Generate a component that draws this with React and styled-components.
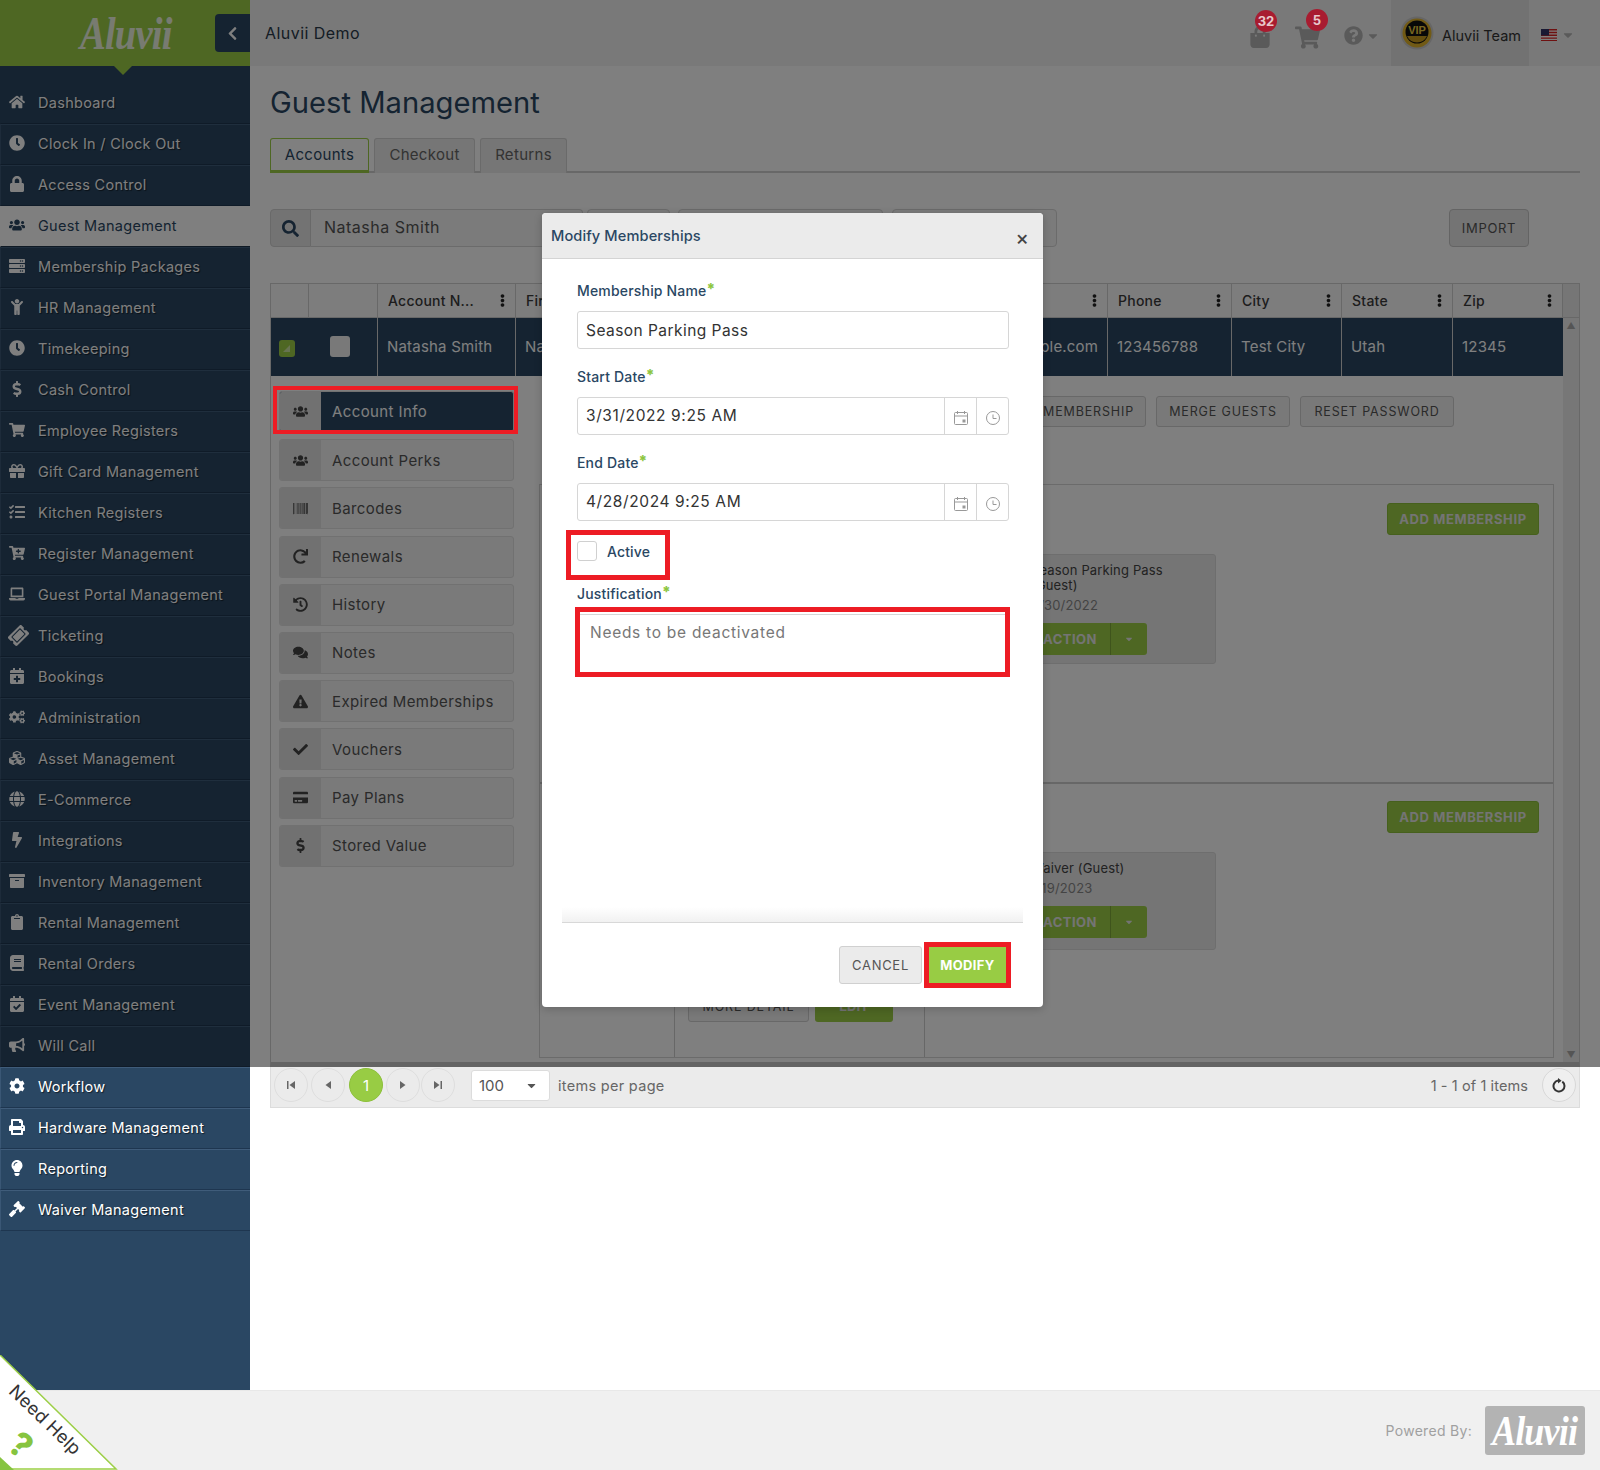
import React from "react";
import styled, { createGlobalStyle } from "styled-components";
import {
  FaHome, FaClock, FaLock, FaUsers, FaServer, FaChild, FaDollarSign, FaShoppingCart, FaGift,
  FaTasks, FaLaptop, FaTicketAlt, FaCalendarPlus, FaCogs, FaCubes, FaGlobe, FaBolt, FaArchive,
  FaClipboard, FaBook, FaCalendarCheck, FaBullhorn, FaCog, FaPrint, FaLightbulb, FaGavel,
  FaSearch, FaBarcode, FaRedo, FaHistory, FaComments, FaExclamationTriangle, FaCheck, FaCreditCard,
  FaChevronLeft, FaShoppingBag, FaQuestionCircle, FaEllipsisV, FaCaretDown, FaCartPlus,
} from "react-icons/fa";

const FONT = `Inter, "Noto Sans", "Liberation Sans", sans-serif`;

const Global = createGlobalStyle`
  html, body { margin: 0; padding: 0; background: #fff; }
  body { font-family: ${FONT}; color: #333; }
  * { box-sizing: border-box; }
`;

const Root = styled.div`
  position: relative;
  width: 1600px;
  height: 1470px;
  overflow: hidden;
  display: grid;
  grid-template-columns: 250px 1350px;
  grid-template-rows: 1390px 80px;
`;

/* ---------- sidebar ---------- */
const Sidebar = styled.aside`
  background: #2a4763;
  display: flex;
  flex-direction: column;
`;
const Brand = styled.div`
  position: relative;
  height: 66px;
  background: #9ccf46;
  flex: none;
  &::after {
    content: "";
    position: absolute;
    left: 114px;
    top: 66px;
    border: 9px solid transparent;
    border-top-color: #9ccf46;
    border-bottom: 0;
  }
`;
const BrandMark = styled.span`
  position: absolute;
  left: 80px;
  top: 6px;
  font-family: "Liberation Serif", serif;
  font-style: italic;
  font-weight: 700;
  font-size: 46px;
  line-height: 56px;
  color: #fff;
  opacity: 0.85;
  letter-spacing: -1px;
  transform-origin: left center;
  transform: scaleX(0.84);
`;
const Toggle = styled.button`
  position: absolute;
  left: 215px;
  top: 14px;
  width: 35px;
  height: 38px;
  border: 0;
  border-radius: 4px 0 0 4px;
  background: #2a4763;
  color: #fff;
  display: flex;
  align-items: center;
  justify-content: center;
  font-size: 15px;
  padding: 0;
`;
const Nav = styled.nav`
  margin-top: 17px;
  display: flex;
  flex-direction: column;
`;
const NavRow = styled.div`
  height: 41px;
  display: flex;
  align-items: center;
  padding: 0 0 3px 8px;
  font-size: 14.5px;
  letter-spacing: 0.3px;
  border-bottom: 1px solid ${(p) => (p.$active ? "#1d3249" : "#1e3650")};
  border-top: 1px solid ${(p) => (p.$active ? "#fff" : "#3f5c7a")};
  border-left: 1px solid ${(p) => (p.$active ? "transparent" : "#3a5775")};
  background: ${(p) => (p.$active ? "#fff" : "#2a4763")};
  color: ${(p) => (p.$active ? "#2a4763" : "#fff")};
  text-shadow: ${(p) => (p.$active ? "none" : "1px 1px 1px rgba(0,0,0,.55)")};
  &:first-child { border-left-color: transparent; border-top-color: transparent; }
`;
const NavIcon = styled.span`
  width: 29px;
  flex: none;
  display: flex;
  align-items: center;
  font-size: 16px;
  color: ${(p) => (p.$active ? "#2a4763" : "#fff")};
`;
const TiltedTicket = styled(FaTicketAlt)`
  transform: rotate(-45deg);
  font-size: 19px;
`;

/* ---------- main ---------- */
const Main = styled.main`
  display: flex;
  flex-direction: column;
  min-width: 0;
  background: #fff;
`;
const TopBar = styled.header`
  height: 66px;
  flex: none;
  background: #f2f2f2;
  display: flex;
  align-items: center;
  padding-left: 15px;
`;
const Company = styled.div`
  font-size: 16px;
  letter-spacing: 0.45px;
  color: #2a3a4a;
  flex: 1;
  margin-top: -1px;
`;
const TopIcon = styled.div`
  position: relative;
  display: flex;
  align-items: center;
  gap: ${(p) => p.$gap || 0}px;
  padding-left: ${(p) => p.$pl || 0}px;
  color: #b4b4b4;
  margin-top: ${(p) => p.$mt ?? 8}px;
  width: ${(p) => p.$w}px;
`;
const Badge = styled.span`
  position: absolute;
  z-index: 6;
  top: -16px;
  left: ${(p) => p.$left}px;
  width: 22px;
  height: 22px;
  border-radius: 50%;
  background: #a81c30;
  color: #e8c9cc;
  font-size: 13px;
  font-weight: 700;
  display: flex;
  align-items: center;
  justify-content: center;
`;
const UserBox = styled.div`
  width: 138px;
  height: 66px;
  background: #e4e4e4;
  display: flex;
  align-items: center;
  padding-left: 9px;
  gap: 8px;
  font-size: 14.5px;
  color: #333;
`;
const UserName = styled.span`
  margin-top: 4px;
`;
const LangBox = styled.div`
  width: 71px;
  display: flex;
  align-items: center;
  gap: 4px;
  padding-left: 12px;
  color: #b4b4b4;
  margin-top: 3px;
`;
const Page = styled.div`
  display: flex;
  flex-direction: column;
  padding: 0 20px;
`;
const Title = styled.h1`
  margin: 19px 0 17px;
  height: 36px;
  font-size: 29.2px;
  line-height: 36px;
  font-weight: 400;
  letter-spacing: 0;
  color: #2a4763;
`;
const Tabs = styled.div`
  height: 35px;
  display: flex;
  gap: 5px;
  border-bottom: 2px solid #d0d0d0;
`;
const Tab = styled.div`
  height: 35px;
  width: ${(p) => p.$w}px;
  display: flex;
  align-items: center;
  justify-content: center;
  padding-bottom: ${(p) => (p.$active ? 0 : 3)}px;
  font-size: 15px;
  letter-spacing: 0.3px;
  border: 1px solid ${(p) => (p.$active ? "#9ccf46" : "#d4d4d4")};
  border-bottom: ${(p) => (p.$active ? "3px solid #9ccf46" : "0")};
  border-radius: 3px 3px 0 0;
  background: ${(p) => (p.$active ? "#fff" : "#ececec")};
  color: ${(p) => (p.$active ? "#2a4763" : "#666")};
`;
const SearchRow = styled.div`
  margin-top: 36px;
  height: 38px;
  display: flex;
`;
const SearchAddon = styled.div`
  width: 41px;
  flex: none;
  border: 1px solid #d2d2d2;
  border-radius: 4px 0 0 4px;
  background: #e6e6e6;
  color: #2a4763;
  display: flex;
  align-items: center;
  justify-content: center;
  font-size: 17px;
`;
const SearchInput = styled.div`
  width: ${(p) => p.$w}px;
  flex: none;
  margin-left: ${(p) => p.$ml || 0}px;
  border: 1px solid #d6d6d6;
  border-left-width: ${(p) => (p.$join ? 0 : 1)}px;
  border-radius: ${(p) => (p.$join ? "0 4px 4px 0" : "4px")};
  background: #f6f6f6;
  padding: 0 0 2px 13px;
  font-size: 16px;
  letter-spacing: 0.5px;
  color: #555;
  display: flex;
  align-items: center;
`;
const ImportButton = styled.div`
  margin-left: auto;
  margin-right: 51px;
  width: 80px;
  border: 1px solid #c8c8c8;
  border-radius: 4px;
  background: #e8e8e8;
  color: #555;
  font-size: 13px;
  letter-spacing: 0.7px;
  display: flex;
  align-items: center;
  justify-content: center;
`;

/* ---------- grid ---------- */
const COLS = "38px 69px 138px 125px 160px 307px 124px 110px 111px 110px";
const Grid = styled.section`
  margin-top: 36px;
  height: 784px;
  border: 1px solid #d0d0d0;
  border-bottom-width: 5px;
  border-bottom-color: #c8c8c8;
  display: flex;
  flex-direction: column;
  overflow: hidden;
`;
const HeadRow = styled.div`
  height: 34px;
  flex: none;
  display: grid;
  grid-template-columns: ${COLS} 16px;
  background: #fafafa;
`;
const HeadCell = styled.div`
  border-right: 1px solid #d0d0d0;
  border-bottom: 1px solid #d0d0d0;
  display: flex;
  align-items: center;
  justify-content: space-between;
  padding: 0 6px 0 10px;
  font-size: 14px;
  letter-spacing: 0.25px;
  font-weight: 500;
  color: #3a3a3a;
  white-space: nowrap;
  &:last-child { border-right: 0; background: #ededed; }
`;
const GridBody = styled.div`
  flex: 1;
  display: flex;
  min-height: 0;
`;
const GridScroll = styled.div`
  width: 1292px;
  flex: none;
  display: flex;
  flex-direction: column;
`;
const ScrollBar = styled.div`
  width: 16px;
  flex: none;
  background: #efefef;
  display: flex;
  flex-direction: column;
  justify-content: space-between;
  align-items: center;
  padding: 3px 0;
  color: #aaa;
  font-size: 9px;
  line-height: 9px;
`;
const DataRow = styled.div`
  height: 58px;
  flex: none;
  display: grid;
  grid-template-columns: ${COLS};
  background: #2a4763;
  color: #fff;
`;
const DataCell = styled.div`
  border-right: ${(p) => (p.$plain ? "0" : "1px solid #d0d0d0")};
  display: flex;
  align-items: center;
  justify-content: ${(p) => p.$align || "flex-start"};
  padding-left: ${(p) => (p.$align ? 0 : 9)}px;
  padding-bottom: 1px;
  font-size: 15px;
  letter-spacing: 0.2px;
  white-space: nowrap;
  overflow: hidden;
`;
const RowSelect = styled.span`
  width: 16px;
  height: 17px;
  margin-top: 4px;
  margin-left: -6px;
  border-radius: 3px;
  background: #9ccf46;
  position: relative;
  &::after {
    content: "";
    position: absolute;
    left: 4px;
    top: 5px;
    border-style: solid;
    border-width: 0 0 7px 7px;
    border-color: transparent transparent #cfe6a2 transparent;
  }
`;
const RowCheck = styled.span`
  width: 20px;
  height: 21px;
  margin-left: -6px;
  border-radius: 3px;
  background: #f2f2f2;
`;
const Detail = styled.div`
  flex: 1;
  display: flex;
`;
const SideTabs = styled.div`
  width: 268px;
  flex: none;
  padding: 15px 0 0 8px;
`;
const SideTab = styled.div`
  width: 235px;
  height: ${(p) => (p.$active ? 41 : 42)}px;
  margin-bottom: ${(p) => (p.$active ? 7.2 : 6.2)}px;
  display: flex;
  border: 1px solid #e2e2e2;
  border-radius: 3px;
  overflow: hidden;
  background: ${(p) => (p.$active ? "#2a4763" : "#f4f4f4")};
  color: ${(p) => (p.$active ? "#fff" : "#555")};
  font-size: 15px;
  letter-spacing: 0.4px;
`;
const SideTabIcon = styled.span`
  width: 41px;
  flex: none;
  background: #e2e2e2;
  color: #444;
  display: flex;
  align-items: center;
  justify-content: center;
  font-size: 15px;
`;
const SideTabLabel = styled.span`
  padding-left: 11px;
  display: flex;
  align-items: center;
`;
const DetailMain = styled.div`
  flex: 1;
  display: flex;
  flex-direction: column;
  padding-top: 20px;
`;
const Actions = styled.div`
  display: flex;
  justify-content: flex-end;
  padding-right: 109px;
  height: 31px;
`;
const GhostButton = styled.div`
  width: ${(p) => p.$w}px;
  height: ${(p) => p.$h || 31}px;
  margin-left: ${(p) => p.$ml || 0}px;
  padding-right: ${(p) => p.$pr || 0}px;
  border: 1px solid #d0d0d0;
  border-radius: 3px;
  background: #f3f3f3;
  color: #555;
  font-size: 12.5px;
  letter-spacing: 0.85px;
  display: flex;
  align-items: center;
  justify-content: ${(p) => (p.$pr ? "flex-end" : "center")};
  white-space: nowrap;
`;
const Panel = styled.div`
  margin-top: 57px;
  width: 1015px;
  height: 574px;
  border: 1px solid #d6d6d6;
  display: flex;
  flex-direction: column;
`;
const PanelSection = styled.div`
  height: ${(p) => p.$h}px;
  display: grid;
  grid-template-columns: 135px 250px 1fr;
  border-bottom: ${(p) => (p.$line ? "2px solid #cfcfcf" : "0")};
`;
const PanelCol = styled.div`
  border-right: 1px solid #cfcfcf;
  padding: ${(p) => p.$pad || "0"};
  display: flex;
  gap: 6px;
  align-items: flex-start;
`;
const PanelRight = styled.div`
  display: flex;
  flex-direction: column;
  padding: ${(p) => p.$top}px 14px 0 91px;
`;
const AddButton = styled.div`
  align-self: flex-end;
  width: 152px;
  height: 32px;
  background: #9ccf46;
  border: 1px solid #8cc03a;
  border-radius: 3px;
  color: #e8e8e8;
  font-size: 13px;
  font-weight: 700;
  letter-spacing: 0.6px;
  display: flex;
  align-items: center;
  justify-content: center;
`;
const MemberCard = styled.div`
  margin-top: 19px;
  width: 200px;
  height: ${(p) => p.$h}px;
  background: #ebebeb;
  border: 1px solid #dcdcdc;
  border-radius: 3px;
  padding: 8px 12px 0 14px;
  font-size: 13px;
  line-height: 15px;
  letter-spacing: 0.15px;
  color: #444;
`;
const MemberDate = styled.div`
  margin-top: 2px;
  color: #888;
  line-height: 20px;
`;
const SplitButton = styled.div`
  margin-top: 8px;
  width: 116px;
  height: 32px;
  display: flex;
  background: #9ccf46;
  border-radius: 3px;
  color: #e8e8e8;
  font-size: 13px;
  font-weight: 700;
  letter-spacing: 0.5px;
`;
const SplitLabel = styled.span`
  flex: 1;
  display: flex;
  align-items: center;
  justify-content: flex-end;
  padding-right: 13px;
  border-right: 1px solid #7fa838;
`;
const SplitCaret = styled.span`
  width: 36px;
  display: flex;
  align-items: center;
  justify-content: center;
  font-size: 10px;
`;
const EditButton = styled.div`
  width: 78px;
  height: 32px;
  background: #9ccf46;
  border-radius: 3px;
  color: #e8e8e8;
  font-weight: 700;
  font-size: 13px;
  display: flex;
  align-items: center;
  justify-content: center;
`;

/* ---------- pager ---------- */
const Pager = styled.div`
  height: 41px;
  flex: none;
  background: #ebebeb;
  border-bottom: 1px solid #dcdcdc;
  border-left: 1px solid #dcdcdc;
  border-right: 1px solid #dcdcdc;
  display: flex;
  align-items: center;
  padding: 0 3px 4px 3px;
`;
const PageDot = styled.div`
  width: 34px;
  height: 34px;
  margin-right: ${(p) => p.$mr ?? 3}px;
  border-radius: 50%;
  border: 1px solid ${(p) => (p.$on ? "#8cc03a" : "#dedede")};
  background: ${(p) => (p.$on ? "#98cc44" : "#ebebeb")};
  color: ${(p) => (p.$on ? "#fff" : "#666")};
  display: flex;
  align-items: center;
  justify-content: center;
  font-size: 15px;
`;
const PageSize = styled.div`
  width: 79px;
  height: 31px;
  margin-left: 13px;
  background: #fff;
  border: 1px solid #dcdcdc;
  border-radius: 3px;
  display: flex;
  align-items: center;
  justify-content: space-between;
  padding: 0 11px 0 7px;
  font-size: 15px;
  color: #555;
`;
const PagerText = styled.span`
  font-size: 14.5px;
  letter-spacing: ${(p) => p.$ls ?? 0.3}px;
  color: #666;
  margin-left: ${(p) => p.$ml || 0}px;
`;
const Spacer = styled.div`
  flex: 1;
`;
const Refresh = styled.div`
  width: 34px;
  height: 34px;
  margin-left: 14px;
  border-radius: 50%;
  border: 1px solid #d8d8d8;
  background: #efefef;
  display: flex;
  align-items: center;
  justify-content: center;
  color: #333;
`;

/* ---------- footer ---------- */
const Footer = styled.footer`
  grid-column: 1 / -1;
  background: #f0f0f0;
  border-top: 1px solid #e8e8e8;
  display: flex;
  align-items: center;
  justify-content: flex-end;
  padding-right: 15px;
  gap: 13px;
`;
const Powered = styled.span`
  font-size: 14px;
  letter-spacing: 0.3px;
  color: #a0a0a0;
`;
const FooterLogo = styled.div`
  width: 100px;
  height: 49px;
  background: #b3b3b3;
  border-radius: 3px;
  color: #fff;
  font-family: "Liberation Serif", serif;
  font-style: italic;
  font-weight: 700;
  font-size: 42px;
  letter-spacing: -1px;
  display: flex;
  align-items: center;
  justify-content: center;
  overflow: hidden;
`;
const FooterLogoText = styled.span`
  display: block;
  transform: scaleX(0.86);
`;

/* ---------- overlay + modal ---------- */
const Scrim = styled.div`
  position: absolute;
  left: 0;
  top: 0;
  width: 1600px;
  height: 1067px;
  background: rgba(0, 0, 0, 0.5);
  z-index: 3;
`;
const Modal = styled.div`
  position: absolute;
  z-index: 4;
  left: 542px;
  top: 213px;
  width: 501px;
  height: 794px;
  background: #fff;
  border-radius: 4px;
  box-shadow: 0 2px 8px rgba(0, 0, 0, 0.2);
  display: flex;
  flex-direction: column;
  overflow: hidden;
`;
const ModalHead = styled.div`
  height: 46px;
  flex: none;
  background: #ebebeb;
  border-bottom: 1px solid #d4d4d4;
  display: flex;
  align-items: center;
  justify-content: space-between;
  padding: 0 14px 0 9px;
  font-size: 14.6px;
  font-weight: 500;
  letter-spacing: 0.1px;
  color: #2a4763;
`;
const CloseX = styled.span`
  font-size: 20px;
  color: #444;
  margin-top: 5px;
  line-height: 20px;
`;
const ModalBody = styled.div`
  flex: 1;
  display: flex;
  flex-direction: column;
  padding: 22px 34px 0 35px;
`;
const FieldLabel = styled.label`
  height: 20px;
  margin-top: ${(p) => p.$mt || 0}px;
  margin-bottom: 10px;
  padding-bottom: 2px;
  display: flex;
  align-items: center;
  font-size: 14px;
  font-weight: 500;
  letter-spacing: 0.18px;
  color: #2a4763;
`;
const Required = styled.span`
  color: #8dc63f;
  font-size: 15px;
  font-weight: 800;
  line-height: 14px;
  align-self: flex-start;
  margin-top: 1px;
`;
const TextField = styled.div`
  height: 38px;
  flex: none;
  border: 1px solid #d6d6d6;
  border-radius: 3px;
  display: flex;
  align-items: center;
  padding-left: 8px;
  font-size: 15.5px;
  letter-spacing: 0.45px;
  color: #333;
`;
const DateField = styled(TextField)`
  padding-left: 0;
`;
const DateValue = styled.span`
  flex: 1;
  padding: 0 0 2px 8px;
  letter-spacing: 0.6px;
`;
const DateAddon = styled.span`
  width: 32px;
  height: 100%;
  border-left: 1px solid #d6d6d6;
  display: flex;
  align-items: center;
  justify-content: center;
  padding-top: 3px;
  color: #999;
`;
const CheckRow = styled.div`
  margin-top: 20px;
  height: 20px;
  flex: none;
  display: flex;
  align-items: center;
  gap: 10px;
  font-size: 14px;
  font-weight: 500;
  letter-spacing: 0.15px;
  color: #2a4763;
`;
const CheckBox = styled.span`
  width: 20px;
  height: 20px;
  border: 1px solid #d0d0d0;
  border-radius: 3px;
  background: #fff;
`;
const TextArea = styled.div`
  height: 61px;
  flex: none;
  border-top: 1px solid #d6d6d6;
  padding: 7px 0 0 13px;
  font-size: 15.5px;
  letter-spacing: 0.72px;
  line-height: 22px;
  color: #777;
`;
const ModalFoot = styled.div`
  margin: auto -14px 0 -15px;
  flex: none;
`;
const FootRule = styled.div`
  height: 16px;
  background: linear-gradient(#fff, #f1f1f1);
  border-bottom: 1px solid #d8d8d8;
`;
const FootButtons = styled.div`
  display: flex;
  justify-content: flex-end;
  gap: 7px;
  padding: 23px 17px 23px 0;
`;
const CancelButton = styled.div`
  width: 83px;
  height: 38px;
  background: #ebebeb;
  border: 1px solid #d0d0d0;
  border-radius: 3px;
  color: #555;
  font-size: 13px;
  letter-spacing: 0.7px;
  display: flex;
  align-items: center;
  justify-content: center;
`;
const ModifyButton = styled.div`
  width: 77px;
  height: 38px;
  background: #98cc44;
  color: #fff;
  font-size: 13px;
  font-weight: 700;
  letter-spacing: 0.35px;
  display: flex;
  align-items: center;
  justify-content: center;
`;

/* ---------- annotation boxes that lie over the picture ---------- */
const RedBox = styled.div`
  position: absolute;
  z-index: 5;
  left: ${(p) => p.$x}px;
  top: ${(p) => p.$y}px;
  width: ${(p) => p.$w}px;
  height: ${(p) => p.$h}px;
  border: ${(p) => p.$t}px solid #ed1c24;
`;

/* ---------- need help ribbon ---------- */
const HelpCorner = styled.div`
  position: absolute;
  z-index: 7;
  left: 0;
  top: 1355px;
  width: 118px;
  height: 115px;
`;
const HelpText = styled.span`
  position: absolute;
  left: -5px;
  top: 54px;
  width: 100px;
  text-align: center;
  transform: rotate(44deg);
  font-size: 18px;
  line-height: 22px;
  color: #333;
  white-space: nowrap;
  letter-spacing: 0.2px;
`;
const HelpMark = styled.span`
  position: absolute;
  left: 11px;
  top: 72px;
  transform: rotate(38deg);
  font-size: 34px;
  line-height: 36px;
  font-weight: 800;
  color: #86c440;
`;

const menu = [
  ["Dashboard", FaHome], ["Clock In / Clock Out", FaClock], ["Access Control", FaLock],
  ["Guest Management", FaUsers, true], ["Membership Packages", FaServer], ["HR Management", FaChild],
  ["Timekeeping", FaClock], ["Cash Control", FaDollarSign], ["Employee Registers", FaShoppingCart],
  ["Gift Card Management", FaGift], ["Kitchen Registers", FaTasks], ["Register Management", FaCartPlus],
  ["Guest Portal Management", FaLaptop], ["Ticketing", TiltedTicket], ["Bookings", FaCalendarPlus],
  ["Administration", FaCogs], ["Asset Management", FaCubes], ["E-Commerce", FaGlobe],
  ["Integrations", FaBolt], ["Inventory Management", FaArchive], ["Rental Management", FaClipboard],
  ["Rental Orders", FaBook], ["Event Management", FaCalendarCheck], ["Will Call", FaBullhorn],
  ["Workflow", FaCog], ["Hardware Management", FaPrint], ["Reporting", FaLightbulb], ["Waiver Management", FaGavel],
];
const sideTabs = [
  ["Account Info", FaUsers, true], ["Account Perks", FaUsers], ["Barcodes", FaBarcode], ["Renewals", FaRedo],
  ["History", FaHistory], ["Notes", FaComments], ["Expired Memberships", FaExclamationTriangle],
  ["Vouchers", FaCheck], ["Pay Plans", FaCreditCard], ["Stored Value", FaDollarSign],
];

const Dots = () => <FaEllipsisV size={13} color="#222" />;

const CalIcon = () => (
  <svg width="16" height="16" viewBox="0 0 16 16" fill="none" stroke="currentColor">
    <rect x="1.5" y="2.5" width="13" height="12" rx="1" />
    <path d="M1.5 6h13M4.5 1v3M11.5 1v3" />
    <rect x="9.5" y="9.5" width="3" height="3" fill="currentColor" stroke="none" />
  </svg>
);
const ClockIcon = () => (
  <svg width="16" height="16" viewBox="0 0 16 16" fill="none" stroke="currentColor">
    <circle cx="8" cy="8" r="6.5" />
    <path d="M8 4.5V8.5H11.5" />
  </svg>
);
const PageGlyph = ({ d }) => (
  <svg width="10" height="10" viewBox="0 0 10 10" fill="#666">
    <path d={d} />
  </svg>
);
const ReloadIcon = () => (
  <svg width="16" height="16" viewBox="0 0 16 16" fill="none">
    <path d="M11.3 4.6A5.5 5.5 0 1 1 7 3.6" stroke="currentColor" strokeWidth="2" />
    <path d="M7 1v5.4l3.6-2.7z" fill="currentColor" />
  </svg>
);
const Avatar = () => (
  <svg width="34" height="34" viewBox="0 0 34 34">
    <circle cx="17" cy="17" r="16.5" fill="#ccc" />
    <circle cx="17" cy="17" r="14.5" fill="#e2b42a" />
    <circle cx="17" cy="16" r="11.5" fill="#111" />
    <path d="M7 20h20a11 11 0 0 1-20 0z" fill="#c99a1c" />
    <text x="17" y="18" textAnchor="middle" fontSize="11" fontWeight="700" fill="#f0cf40" fontFamily="Liberation Sans, sans-serif">VIP</text>
  </svg>
);
const Flag = () => (
  <svg width="16" height="12" viewBox="0 0 16 12">
    <rect width="16" height="12" fill="#fff" />
    <path d="M0 0h16v1.4H0zM0 2.8h16v1.4H0zM0 5.6h16V7H0zM0 8.4h16v1.4H0zM0 11h16v1H0z" fill="#d22" />
    <rect width="8" height="6.5" fill="#336" />
  </svg>
);

export default function App() {
  return (
    <>
      <Global />
      <Root>
        <Sidebar>
          <Brand>
            <BrandMark>Aluvii</BrandMark>
            <Toggle><FaChevronLeft /></Toggle>
          </Brand>
          <Nav>
            {menu.map(([label, Icon, active]) => (
              <NavRow key={label} $active={active}>
                <NavIcon $active={active}><Icon /></NavIcon>
                {label}
              </NavRow>
            ))}
          </Nav>
        </Sidebar>

        <Main>
          <TopBar>
            <Company>Aluvii Demo</Company>
            <TopIcon $w={48} $pl={2}>
              <FaShoppingBag size={22} />
              <Badge $left={8}>32</Badge>
            </TopIcon>
            <TopIcon $w={46}>
              <FaShoppingCart size={25} />
              <Badge $left={11}>5</Badge>
            </TopIcon>
            <TopIcon $w={50} $pl={3} $gap={3} $mt={5}>
              <FaQuestionCircle size={19} />
              <FaCaretDown size={14} />
            </TopIcon>
            <UserBox><Avatar /><UserName>Aluvii Team</UserName></UserBox>
            <LangBox><Flag /><FaCaretDown size={14} /></LangBox>
          </TopBar>

          <Page>
            <Title>Guest Management</Title>
            <Tabs>
              <Tab $active $w={99}>Accounts</Tab>
              <Tab $w={101}>Checkout</Tab>
              <Tab $w={87}>Returns</Tab>
            </Tabs>
            <SearchRow>
              <SearchAddon><FaSearch /></SearchAddon>
              <SearchInput $join $w={272}>Natasha Smith</SearchInput>
              <SearchInput $ml={4} $w={83} />
              <SearchInput $ml={8} $w={205} />
              <SearchInput $ml={9} $w={165} />
              <ImportButton>IMPORT</ImportButton>
            </SearchRow>

            <Grid>
              <HeadRow>
                <HeadCell />
                <HeadCell />
                <HeadCell>Account N...<Dots /></HeadCell>
                <HeadCell>First</HeadCell>
                <HeadCell />
                <HeadCell>Email<Dots /></HeadCell>
                <HeadCell>Phone<Dots /></HeadCell>
                <HeadCell>City<Dots /></HeadCell>
                <HeadCell>State<Dots /></HeadCell>
                <HeadCell>Zip<Dots /></HeadCell>
                <HeadCell />
              </HeadRow>
              <GridBody>
                <GridScroll>
                  <DataRow>
                    <DataCell $plain $align="center"><RowSelect /></DataCell>
                    <DataCell $align="center"><RowCheck /></DataCell>
                    <DataCell>Natasha Smith</DataCell>
                    <DataCell>Natasha</DataCell>
                    <DataCell>Smith</DataCell>
                    <DataCell $align="flex-end">natasha@example.com&nbsp;&nbsp;</DataCell>
                    <DataCell>123456788</DataCell>
                    <DataCell>Test City</DataCell>
                    <DataCell>Utah</DataCell>
                    <DataCell $plain>12345</DataCell>
                  </DataRow>
                  <Detail>
                    <SideTabs>
                      {sideTabs.map(([label, Icon, active]) => (
                        <SideTab key={label} $active={active}>
                          <SideTabIcon><Icon /></SideTabIcon>
                          <SideTabLabel>{label}</SideTabLabel>
                        </SideTab>
                      ))}
                    </SideTabs>
                    <DetailMain>
                      <Actions>
                        <GhostButton $w={170} $pr={11}>EDIT MEMBERSHIP</GhostButton>
                        <GhostButton $w={134} $ml={10}>MERGE GUESTS</GhostButton>
                        <GhostButton $w={154} $ml={10}>RESET PASSWORD</GhostButton>
                      </Actions>
                      <Panel>
                        <PanelSection $h={299} $line>
                          <PanelCol />
                          <PanelCol />
                          <PanelRight $top={18}>
                            <AddButton>ADD MEMBERSHIP</AddButton>
                            <MemberCard $h={110}>
                              Season Parking Pass (Guest)
                              <MemberDate>3/30/2022</MemberDate>
                              <SplitButton><SplitLabel>ACTION</SplitLabel><SplitCaret><FaCaretDown /></SplitCaret></SplitButton>
                            </MemberCard>
                          </PanelRight>
                        </PanelSection>
                        <PanelSection $h={273}>
                          <PanelCol />
                          <PanelCol $pad="206px 0 0 13px">
                            <GhostButton $w={121} $h={32}>MORE DETAIL</GhostButton>
                            <EditButton>EDIT</EditButton>
                          </PanelCol>
                          <PanelRight $top={17}>
                            <AddButton>ADD MEMBERSHIP</AddButton>
                            <MemberCard $h={98}>
                              Waiver (Guest)
                              <MemberDate>1/19/2023</MemberDate>
                              <SplitButton><SplitLabel>ACTION</SplitLabel><SplitCaret><FaCaretDown /></SplitCaret></SplitButton>
                            </MemberCard>
                          </PanelRight>
                        </PanelSection>
                      </Panel>
                    </DetailMain>
                  </Detail>
                </GridScroll>
                <ScrollBar><span>▲</span><span>▼</span></ScrollBar>
              </GridBody>
            </Grid>

            <Pager>
              <PageDot><PageGlyph d="M1 1h1.5v8H1zM9 1v8L3.5 5z" /></PageDot>
              <PageDot $mr={4}><PageGlyph d="M8 1v8L2.5 5z" /></PageDot>
              <PageDot $on $mr={3}>1</PageDot>
              <PageDot $mr={1}><PageGlyph d="M2 1v8l5.5-4z" /></PageDot>
              <PageDot><PageGlyph d="M1 1v8l5.5-4zM7.5 1H9v8H7.5z" /></PageDot>
              <PageSize>100<FaCaretDown size={13} /></PageSize>
              <PagerText $ml={8}>items per page</PagerText>
              <Spacer />
              <PagerText $ls={0.1}>1 - 1 of 1 items</PagerText>
              <Refresh><ReloadIcon /></Refresh>
            </Pager>
          </Page>
        </Main>

        <Footer>
          <Powered>Powered By:</Powered>
          <FooterLogo><FooterLogoText>Aluvii</FooterLogoText></FooterLogo>
        </Footer>

        <Scrim />

        <Modal>
          <ModalHead>
            Modify Memberships
            <CloseX>×</CloseX>
          </ModalHead>
          <ModalBody>
            <FieldLabel>Membership Name<Required>*</Required></FieldLabel>
            <TextField>Season Parking Pass</TextField>
            <FieldLabel $mt={18}>Start Date<Required>*</Required></FieldLabel>
            <DateField>
              <DateValue>3/31/2022 9:25 AM</DateValue>
              <DateAddon><CalIcon /></DateAddon>
              <DateAddon><ClockIcon /></DateAddon>
            </DateField>
            <FieldLabel $mt={18}>End Date<Required>*</Required></FieldLabel>
            <DateField>
              <DateValue>4/28/2024 9:25 AM</DateValue>
              <DateAddon><CalIcon /></DateAddon>
              <DateAddon><ClockIcon /></DateAddon>
            </DateField>
            <CheckRow><CheckBox />Active</CheckRow>
            <FieldLabel $mt={23}>Justification<Required>*</Required></FieldLabel>
            <TextArea>Needs to be deactivated</TextArea>
            <ModalFoot>
              <FootRule />
              <FootButtons>
                <CancelButton>CANCEL</CancelButton>
                <ModifyButton>MODIFY</ModifyButton>
              </FootButtons>
            </ModalFoot>
          </ModalBody>
        </Modal>

        <RedBox $x={273} $y={386} $w={245} $h={48} $t={4} />
        <RedBox $x={566} $y={530} $w={104} $h={50} $t={5} />
        <RedBox $x={575} $y={607} $w={435} $h={70} $t={5} />
        <RedBox $x={924} $y={942} $w={87} $h={46} $t={5} />

        <HelpCorner>
          <svg width="118" height="115" viewBox="0 0 118 115">
            <polygon points="0,0 116,115 0,115" fill="#fff" />
            <polyline points="0,0 116,114 0,114" fill="none" stroke="#9ccf46" strokeWidth="1.5" />
            <polygon points="0,102 14,115 0,115" fill="#86c440" />
          </svg>
          <HelpText>Need Help</HelpText>
          <HelpMark>?</HelpMark>
        </HelpCorner>
      </Root>
    </>
  );
}
